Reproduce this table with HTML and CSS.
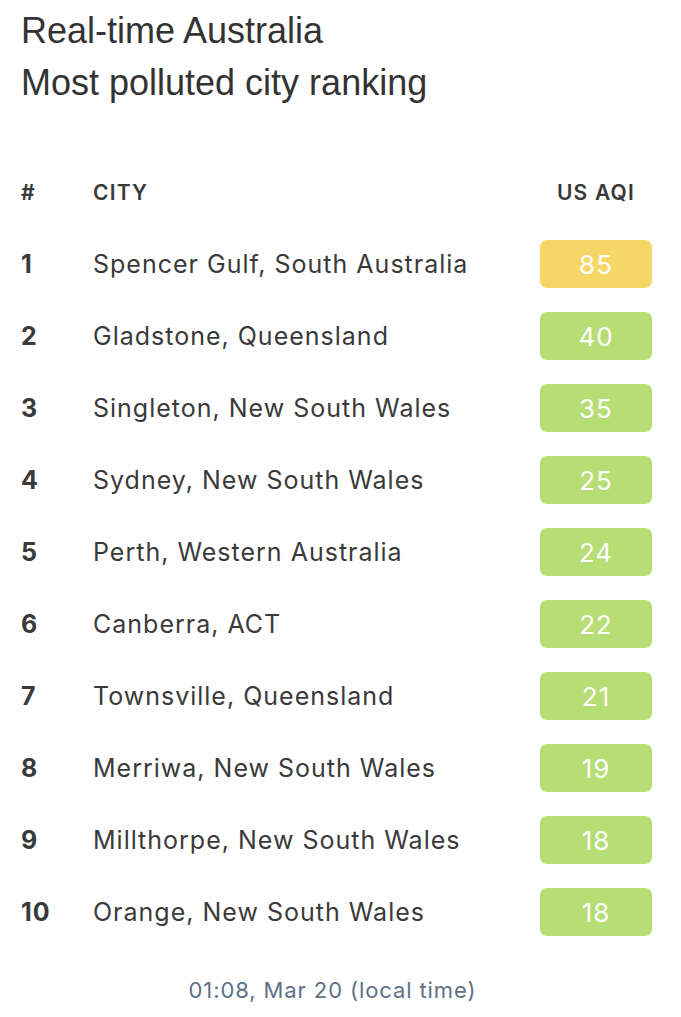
FILE: index.html
```html
<!DOCTYPE html>
<html lang="en">
<head>
<meta charset="utf-8">
<title>Most polluted city ranking</title>
<link rel="stylesheet" href="styles.css">
</head>
<body>
<main class="page">
  <h1 class="title">Real-time Australia<br>Most polluted city ranking</h1>
  <div class="ranking">
    <div class="row head">
      <span class="rank">#</span>
      <span class="city">CITY</span>
      <span class="aqi-head">US AQI</span>
    </div>
    <div class="row"><span class="rank">1</span><span class="city">Spencer Gulf, South Australia</span><span class="badge moderate">85</span></div>
    <div class="row"><span class="rank">2</span><span class="city">Gladstone, Queensland</span><span class="badge good">40</span></div>
    <div class="row"><span class="rank">3</span><span class="city">Singleton, New South Wales</span><span class="badge good">35</span></div>
    <div class="row"><span class="rank">4</span><span class="city">Sydney, New South Wales</span><span class="badge good">25</span></div>
    <div class="row"><span class="rank">5</span><span class="city">Perth, Western Australia</span><span class="badge good">24</span></div>
    <div class="row"><span class="rank">6</span><span class="city">Canberra, ACT</span><span class="badge good">22</span></div>
    <div class="row"><span class="rank">7</span><span class="city">Townsville, Queensland</span><span class="badge good">21</span></div>
    <div class="row"><span class="rank">8</span><span class="city">Merriwa, New South Wales</span><span class="badge good">19</span></div>
    <div class="row"><span class="rank">9</span><span class="city">Millthorpe, New South Wales</span><span class="badge good">18</span></div>
    <div class="row"><span class="rank">10</span><span class="city">Orange, New South Wales</span><span class="badge good">18</span></div>
  </div>
  <p class="updated">01:08, Mar 20 (local time)</p>
</main>
</body>
</html>
```

FILE: styles.css
```css
* { box-sizing: border-box; }
html, body { margin: 0; padding: 0; background: #ffffff; }
.page {
  padding: 5px 29px 0 21px;
  font-family: Inter, "Noto Sans", sans-serif;
  color: #383838;
}
.title {
  margin: 0;
  font-family: "Liberation Sans", Arial, sans-serif;
  font-weight: 400;
  font-size: 36px;
  line-height: 52px;
  color: #333333;
}
.ranking {
  margin-top: 47px;
  display: flex;
  flex-direction: column;
}
.row {
  display: grid;
  grid-template-columns: 72px 1fr 112px;
  align-items: center;
  height: 72px;
  font-size: 25px;
  letter-spacing: 1px;
}
.row.head {
  font-size: 21px;
  font-weight: 600;
  letter-spacing: 1.2px;
}
.rank {
  font-weight: 700;
  color: #3a3a3a;
}
.city { color: #3a3a3a; }
.aqi-head { text-align: center; }
.badge {
  height: 48px;
  border-radius: 7px;
  display: flex;
  align-items: center;
  justify-content: center;
  color: #ffffff;
  font-size: 26px;
  letter-spacing: 1px;
}
.badge.moderate { background: #f7d668; }
.badge.good { background: #b6de74; }
.updated {
  margin: 27px 8px 0 0;
  text-align: center;
  font-size: 22px;
  line-height: 30px;
  letter-spacing: 0.9px;
  color: #5d7189;
}
```
